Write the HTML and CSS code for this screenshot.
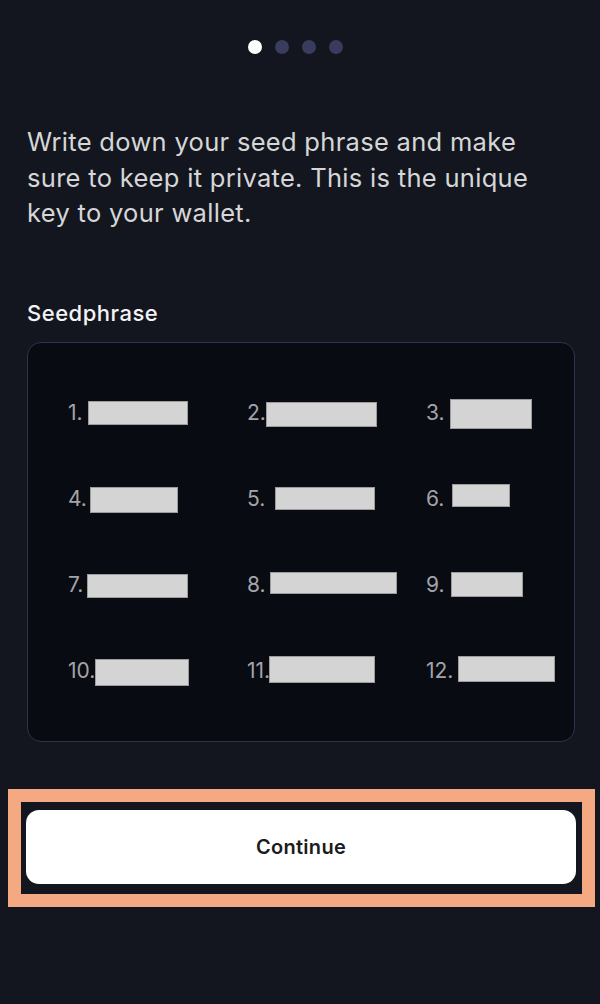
FILE: index.html
```html
<!DOCTYPE html>
<html lang="en">
<head>
  <meta charset="UTF-8"><meta name="viewport" content="width=device-width, initial-scale=1.0">
  <title>Seedphrase</title>
  <link rel="stylesheet" href="styles.css">
</head>
<body>
  <div class="screen">
    <div class="dots">
      <span class="dot active"></span>
      <span class="dot"></span>
      <span class="dot"></span>
      <span class="dot"></span>
    </div>

    <p class="intro">Write down your seed phrase and make sure to keep it private. This is the unique key to your wallet.</p>

    <h2 class="label">Seedphrase</h2>

    <div class="phraseBox">
      <div class="word"><span class="num">1.</span><span class="mask" style="left: 20px; top: 31px; width: 100px; height: 24px"></span></div>
      <div class="word"><span class="num">2.</span><span class="mask" style="left: 19px; top: 32px; width: 111px; height: 25px"></span></div>
      <div class="word"><span class="num">3.</span><span class="mask" style="left: 24px; top: 29px; width: 82px; height: 30px"></span></div>
      <div class="word"><span class="num">4.</span><span class="mask" style="left: 22px; top: 31px; width: 88px; height: 26px"></span></div>
      <div class="word"><span class="num">5.</span><span class="mask" style="left: 28px; top: 31px; width: 100px; height: 23px"></span></div>
      <div class="word"><span class="num">6.</span><span class="mask" style="left: 26px; top: 28px; width: 58px; height: 23px"></span></div>
      <div class="word"><span class="num">7.</span><span class="mask" style="left: 19px; top: 32px; width: 101px; height: 24px"></span></div>
      <div class="word"><span class="num">8.</span><span class="mask" style="left: 23px; top: 30px; width: 127px; height: 22px"></span></div>
      <div class="word"><span class="num">9.</span><span class="mask" style="left: 25px; top: 30px; width: 72px; height: 25px"></span></div>
      <div class="word"><span class="num">10.</span><span class="mask" style="left: 27px; top: 31px; width: 94px; height: 27px"></span></div>
      <div class="word"><span class="num">11.</span><span class="mask" style="left: 22px; top: 28px; width: 106px; height: 27px"></span></div>
      <div class="word"><span class="num">12.</span><span class="mask" style="left: 32px; top: 28px; width: 97px; height: 26px"></span></div>
    </div>

    <div class="highlight">
      <button class="continueBtn">Continue</button>
    </div>
  </div>
</body>
</html>
```

FILE: styles.css
```css
body { box-sizing: border-box; margin: 0; padding: 0; background-color: #13161e; font-family: "Inter", "Open Sans", sans-serif; }
.screen { padding: 0 25px 0 27px; }

.dots { display: flex; justify-content: center; gap: 13px; padding-top: 40px; padding-right: 12px; }
.dot { width: 14px; height: 14px; border-radius: 50%; background-color: #393c5c; }
.dot.active { background-color: #ffffff; }

.intro { margin: 70px 0 0 0; font-size: 25.5px; line-height: 35.5px; letter-spacing: 0.3px; color: #d6d6d8; }
.label { margin: 68px 0 15px 0; font-size: 22px; line-height: 28px; letter-spacing: 0.5px; font-weight: 500; color: #f4f4f5; }

.phraseBox { display: grid; grid-template-columns: repeat(3, 179px); grid-auto-rows: 86px; padding: 27px 0 27px 40px;
             background-color: #090b12; border: 1.5px solid #30324f; border-radius: 14px; }
.word { position: relative; display: flex; align-items: center; }
.num { font-size: 21px; color: #a3a4aa; }
.mask { position: absolute; box-sizing: border-box; background-color: #d4d4d4; border: 1px solid #9c9c9c; }

.highlight { margin: 47px -20px 0 -19px; border: 13px solid #f4a983; padding: 8px 6px 10px 5px; background-color: #13161e; }
.continueBtn { display: block; width: 100%; height: 74px; border: none; border-radius: 13px; background-color: #ffffff;
               font-family: "Inter", sans-serif; font-size: 20px; letter-spacing: 0.3px; font-weight: 600; color: #1b1c22; cursor: pointer; }
```
